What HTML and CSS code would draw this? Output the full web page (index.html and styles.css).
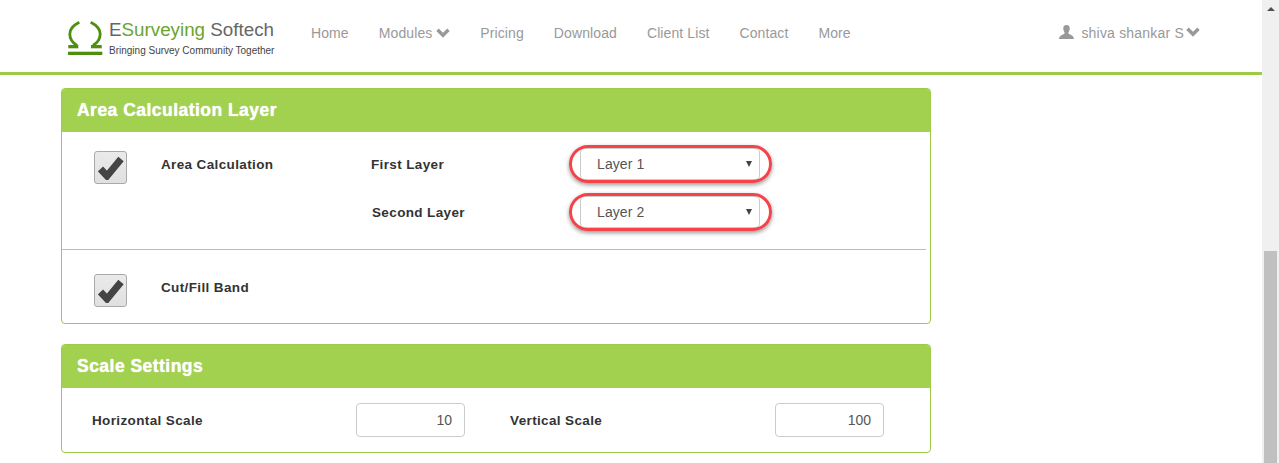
FILE: index.html
```html
<!DOCTYPE html>
<html lang="en">
<head>
<meta charset="utf-8">
<title>Area Calculation Layer</title>
<link rel="stylesheet" href="styles.css">
</head>
<body>
<div class="page">
  <header class="nav">
    <div class="brand">
      <svg class="logo" width="36" height="36" viewBox="0 0 36 36">
        <path d="M11.300 1.300 C5 4.500 1.800 8.500 1.800 13 C1.800 18 5 22 9 24.500 M22.700 1.300 C29 4.500 32.200 8.500 32.200 13 C32.200 18 29 22 25 24.500" fill="none" stroke="#4f8f0f" stroke-width="2.800"/>
        <rect x="0.300" y="24" width="10" height="3.300" fill="#4f8f0f"/>
        <rect x="23" y="24" width="10.700" height="3.300" fill="#4f8f0f"/>
        <rect x="0" y="30.700" width="34.300" height="3.300" fill="#4f8f0f"/>
      </svg>
      <div class="brand-text">
        <div class="brand-name">E<span class="brand-green">Surveying</span> Softech</div>
        <div class="brand-tag">Bringing Survey Community Together</div>
      </div>
    </div>
    <nav class="menu">
      <a>Home</a>
      <a>Modules <svg class="chev" width="14" height="10" viewBox="0 0 14 10"><path d="M1.500 1.800 L7 7.300 L12.500 1.800" fill="none" stroke="#999" stroke-width="3.400"/></svg></a>
      <a>Pricing</a>
      <a>Download</a>
      <a>Client List</a>
      <a>Contact</a>
      <a>More</a>
    </nav>
    <div class="user">
      <svg class="user-icon" width="15" height="14" viewBox="0 0 15 14"><path d="M7.500 0 C10 0 11 2 10.700 4 C10.500 6 9.500 7 9.300 8 C9.300 9.500 15 10 15 14 L0 14 C0 10 5.700 9.500 5.700 8 C5.500 7 4.500 6 4.300 4 C4 2 5 0 7.500 0Z" fill="#999"/></svg>
      <span>shiva shankar S</span>
      <svg class="chev" width="14" height="10" viewBox="0 0 14 10"><path d="M1.500 1.800 L7 7.300 L12.500 1.800" fill="none" stroke="#999" stroke-width="3.400"/></svg>
    </div>
  </header>

  <main class="content">
    <section class="panel">
      <h2 class="panel-head">Area Calculation Layer</h2>
      <div class="area-row">
        <span class="check"><svg width="26" height="24" viewBox="0 0 26 24"><path d="M2.500 13 L9 20 L23 3" fill="none" stroke="#444" stroke-width="7"/></svg></span>
        <label class="lbl lbl-main">Area Calculation</label>
        <div class="layers">
          <div class="layer-row">
            <label class="lbl lbl-layer">First Layer</label>
            <div class="select-wrap"><div class="select">Layer 1<i class="arrow"></i></div><span class="ring"></span></div>
          </div>
          <div class="layer-row">
            <label class="lbl lbl-layer second">Second Layer</label>
            <div class="select-wrap"><div class="select">Layer 2<i class="arrow"></i></div><span class="ring"></span></div>
          </div>
        </div>
      </div>
      <div class="cut-row">
        <span class="check"><svg width="26" height="24" viewBox="0 0 26 24"><path d="M2.500 13 L9 20 L23 3" fill="none" stroke="#444" stroke-width="7"/></svg></span>
        <label class="lbl lbl-main">Cut/Fill Band</label>
      </div>
    </section>

    <section class="panel panel-scale">
      <h2 class="panel-head">Scale Settings</h2>
      <div class="scale-row">
        <label class="lbl scale-h">Horizontal Scale</label>
        <div class="field">10</div>
        <label class="lbl scale-v">Vertical Scale</label>
        <div class="field">100</div>
      </div>
    </section>
  </main>
</div>
<aside class="scrollbar">
  <span class="scroll-up"></span>
  <span class="scroll-thumb"></span>
</aside>
</body>
</html>
```

FILE: styles.css
```css
* { box-sizing: border-box; }
html, body { margin: 0; padding: 0; height: 100%; overflow: hidden; }
body { display: flex; background: #fff; font-family: "Liberation Sans", Arial, sans-serif; color: #333; }
.page { width: 1262px; height: 463px; overflow: hidden; flex: none; }

.nav { height: 75px; border-bottom: 3px solid #9ccb48; display: flex; align-items: flex-start; }
.brand { display: flex; margin-left: 68px; width: 243px; padding-top: 21px; }
.logo { flex: none; margin-right: 5px; }
.brand-name { font-size: 18.800px; line-height: 18px; color: #666; white-space: nowrap; }
.brand-green { color: #6aa52d; }
.brand-tag { font-size: 10px; line-height: 12px; margin-top: 6px; color: #444; white-space: nowrap; }
.menu { display: flex; gap: 30px; padding-top: 25px; font-size: 14px; line-height: 16px; letter-spacing: .1px; color: #999; }
.menu a { white-space: nowrap; }
.chev { display: inline-block; vertical-align: 0; }
.user { margin-left: auto; margin-right: 62px; padding-top: 25px; font-size: 14px; line-height: 16px; letter-spacing: .2px; color: #999; display: flex; align-items: flex-start; gap: 7px; }
.user .chev { margin-left: -5px; margin-top: 2px; }

.content { padding: 13px 0 0 61px; width: 931px; }
.panel { border: 1px solid #9ccb48; border-radius: 4px; overflow: hidden; }
.panel-scale { margin-top: 20px; }
.panel-head { margin: 0; background: #a2d14f; color: #fff; height: 43px; padding: 0 15px; font-size: 17.500px; line-height: 43px; font-weight: bold; letter-spacing: .47px; text-shadow: 0 0 1px #fff; }

.lbl { font-size: 13.500px; font-weight: bold; line-height: 16px; letter-spacing: .37px; color: #333; white-space: nowrap; }
.area-row { display: flex; margin-right: 4px; height: 118px; border-bottom: 1px solid #bbb; padding-left: 32px; }
.check { flex: none; width: 33px; height: 33px; margin-top: 19px; border: 1px solid #aaa; border-radius: 3px; background: linear-gradient(#eaeaea, #e0e0e0); display: flex; align-items: center; justify-content: center; }
.lbl-main { margin-left: 34px; margin-top: 25px; width: 210px; }
.layers { display: flex; flex-direction: column; padding-top: 16px; gap: 16px; }
.layer-row { display: flex; align-items: center; }
.lbl-layer { width: 209px; padding-top: 2px; }
.second { padding-left: 1px; }
.select-wrap { position: relative; }
.select { width: 180px; height: 32px; border: 1px solid #ccc; border-radius: 4px; background: #fff; font-size: 14px; line-height: 30px; letter-spacing: .1px; color: #555; padding-left: 16px; position: relative; }
.arrow { position: absolute; right: 7px; top: 12px; width: 0; height: 0; border-left: 3px solid transparent; border-right: 3px solid transparent; border-top: 6px solid #444; }
.ring { position: absolute; left: -11px; right: -12px; top: -3px; bottom: -3px; border: 3px solid #f5434a; border-radius: 19px; box-shadow: 0 2px 4px rgba(0,0,0,.4); pointer-events: none; }
.cut-row { display: flex; height: 73px; padding-left: 32px; }
.cut-row .check { margin-top: 24px; }
.cut-row .lbl-main { margin-top: 30px; }

.scale-row { display: flex; align-items: center; height: 64px; padding-left: 30px; }
.field { width: 109px; height: 34px; border: 1px solid #ccc; border-radius: 4px; text-align: right; font-size: 14px; line-height: 32px; color: #555; padding-right: 12px; flex: none; }
.scale-h { width: 264px; padding-top: 2px; }
.scale-v { width: 265px; margin-left: 45px; padding-top: 2px; }

.scrollbar { width: 17px; height: 463px; background: #f0f0f0; position: relative; flex: none; }
.scroll-up { position: absolute; left: 5px; top: 7px; width: 0; height: 0; border-left: 4px solid transparent; border-right: 4px solid transparent; border-bottom: 4px solid #505050; }
.scroll-thumb { position: absolute; left: 2px; top: 251px; width: 13px; height: 212px; background: #c0c0c0; }
```
